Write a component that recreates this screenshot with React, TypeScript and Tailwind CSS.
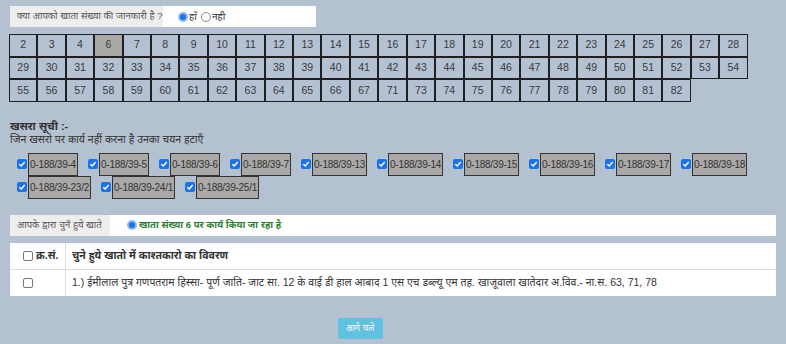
const row1 = [2, 3, 4, 6, 7, 8, 9, 10, 11, 12, 13, 14, 15, 16, 17, 18, 19, 20, 21, 22, 23, 24, 25, 26, 27, 28];
const row2 = [29, 30, 31, 32, 33, 34, 35, 36, 37, 38, 39, 40, 41, 42, 43, 44, 45, 46, 47, 48, 49, 50, 51, 52, 53, 54];
const row3 = [55, 56, 57, 58, 59, 60, 61, 62, 63, 64, 65, 66, 67, 71, 73, 74, 75, 76, 77, 78, 79, 80, 81, 82];

const khasraRow1 = [
  { label: "0-188/39-4", w: 50 },
  { label: "0-188/39-5", w: 50 },
  { label: "0-188/39-6", w: 50 },
  { label: "0-188/39-7", w: 50 },
  { label: "0-188/39-13", w: 55 },
  { label: "0-188/39-14", w: 55 },
  { label: "0-188/39-15", w: 55 },
  { label: "0-188/39-16", w: 55 },
  { label: "0-188/39-17", w: 55 },
  { label: "0-188/39-18", w: 55 },
];
const khasraRow2 = [
  { label: "0-188/39-23/2", w: 63 },
  { label: "0-188/39-24/1", w: 63 },
  { label: "0-188/39-25/1", w: 63 },
];

function Checked() {
  return (
    <span className="w-[10px] h-[10px] rounded-[2px] bg-[#1a73e8] flex items-center justify-center shrink-0">
      <svg width="8" height="8" viewBox="0 0 8 8">
        <path d="M1.3 4.2 L3.2 6 L6.7 2" stroke="white" strokeWidth="1.5" fill="none" />
      </svg>
    </span>
  );
}

function Unchecked() {
  return <span className="w-[10px] h-[10px] rounded-[2px] border border-[#767676] bg-white shrink-0" />;
}

function Radio({ on }: { on: boolean }) {
  return on ? (
    <span className="w-[10px] h-[10px] rounded-full bg-[#1a73e8] border-[2px] border-[#8fb8f0] shrink-0" />
  ) : (
    <span className="w-[10px] h-[10px] rounded-full border border-[#8a8a8a] bg-white shrink-0" />
  );
}

function NumRow({ nums }: { nums: number[] }) {
  return (
    <div className="flex">
      {nums.map((n) => (
        <div
          key={n}
          className={`w-[28.42px] h-[22.6px] border border-[#1f1f1f] flex items-center justify-center text-[10.5px] text-[#3a3a3a] ${
            n === 6 ? "bg-[#aaa9a6]" : "bg-[#b4c1d2]"
          }`}
        >
          {n}
        </div>
      ))}
    </div>
  );
}

function KhasraItem({ label, w }: { label: string; w: number }) {
  return (
    <div className="flex items-center mr-[10px]">
      <Checked />
      <div
        className="h-[23px] ml-[1px] border border-[#333] bg-[#aaa9a7] text-[10px] tracking-[-0.25px] text-[#333] flex items-center overflow-hidden whitespace-nowrap pl-[1px]"
        style={{ width: w }}
      >
        {label}
      </div>
    </div>
  );
}

export default function App() {
  return (
    <div className="min-h-screen w-[786px] h-[344px] overflow-hidden bg-[#b4c1d1] font-['Liberation_Sans','Noto_Sans',sans-serif] text-[#333]">
      <div className="pl-[10px] pt-[6px]">
        {/* khata info */}
        <div className="flex w-[306px] h-[21px]">
          <div className="w-[153px] bg-[#eeeeee] flex items-center pl-[7px] text-[9.5px] text-[#555]">
            क्या आपको खाता संख्या की जानकारी है ?
          </div>
          <div className="flex-1 bg-white flex items-center pl-[15px] text-[10px]">
            <Radio on={true} />
            <span className="ml-[1px] mr-[4px]">हाँ</span>
            <Radio on={false} />
            <span className="ml-[1px]">नही</span>
          </div>
        </div>

        {/* khata numbers */}
        <div className="mt-[7px] -ml-[1px]">
          <NumRow nums={row1} />
          <NumRow nums={row2} />
          <NumRow nums={row3} />
        </div>

        {/* khasra list */}
        <div className="mt-[18px] text-[11px] font-bold text-[#333] leading-[13px]">खसरा सूची :-</div>
        <div className="text-[10.5px] text-[#333] leading-[13px]">जिन खसरो पर कार्य नहीं करना है उनका चयन हटाएँ</div>
        <div className="mt-[7px] pl-[7px]">
          <div className="flex">
            {khasraRow1.map((k) => (
              <KhasraItem key={k.label} {...k} />
            ))}
          </div>
          <div className="flex">
            {khasraRow2.map((k) => (
              <KhasraItem key={k.label} {...k} />
            ))}
          </div>
        </div>

        {/* selected khata */}
        <div className="mt-[16px] flex w-[766px] h-[21px]">
          <div className="w-[100px] bg-[#eeeeee] flex items-center pl-[7px] text-[9.5px] text-[#555]">
            आपके द्वारा चुनें हुये खाते
          </div>
          <div className="flex-1 bg-white flex items-center pl-[17px] text-[9.5px]">
            <Radio on={true} />
            <span className="ml-[2px] font-bold text-[#2e7d32]">खाता संख्या 6 पर कार्य किया जा रहा है</span>
          </div>
        </div>

        {/* table */}
        <div className="mt-[7px] w-[766px] bg-white text-[10.5px]">
          <div className="flex h-[27px] border-b border-[#ddd]">
            <div className="w-[56px] border-r border-[#ddd] flex items-center pl-[13px] gap-[3px]">
              <Unchecked />
              <span className="font-bold">क्र.सं.</span>
            </div>
            <div className="flex-1 flex items-center pl-[6px] font-bold">
              चुने हुये खातो में काश्तकारो का विवरण
            </div>
          </div>
          <div className="flex h-[26px]">
            <div className="w-[56px] border-r border-[#ddd] flex items-center pl-[13px]">
              <Unchecked />
            </div>
            <div className="flex-1 flex items-center pl-[6px]">
              1.) ईमीलाल पुत्र गणपतराम हिस्सा- पूर्ण जाति- जाट सा. 12 के वाई डी हाल आबाद 1 एस एच डब्ल्यू एम तह. खाजूवाला खातेदार अ.विव.- ना.स. 63, 71, 78
            </div>
          </div>
        </div>

        {/* button */}
        <div className="mt-[22px] flex justify-center w-[766px] -ml-[10px]">
          <button className="ml-[-46px] w-[45px] h-[21px] rounded-[2px] bg-[#62c1de] text-white text-[9px] flex items-center justify-center">
            आगे चले
          </button>
        </div>
      </div>
    </div>
  );
}
